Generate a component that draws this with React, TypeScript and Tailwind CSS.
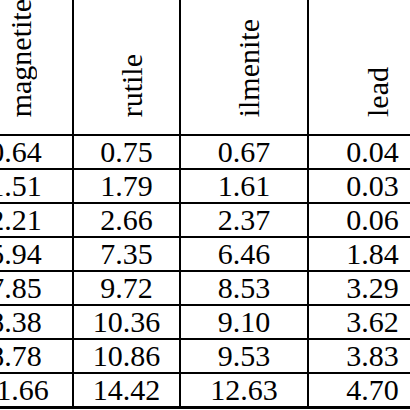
import React from 'react';

const headers = ['magnetite', 'rutile', 'ilmenite', 'lead'];

const rows = [
  ['0.64', '0.75', '0.67', '0.04'],
  ['1.51', '1.79', '1.61', '0.03'],
  ['2.21', '2.66', '2.37', '0.06'],
  ['5.94', '7.35', '6.46', '1.84'],
  ['7.85', '9.72', '8.53', '3.29'],
  ['8.38', '10.36', '9.10', '3.62'],
  ['8.78', '10.86', '9.53', '3.83'],
  ['11.66', '14.42', '12.63', '4.70'],
];

const App = () => {
  return (
    <div className="w-[410px] h-[410px] overflow-hidden bg-white text-black font-['Liberation_Serif','Times_New_Roman',serif]">
      <div className="ml-[-41px] w-[477px] grid grid-cols-[115px_107px_128px_127px]">
        {headers.map((h, i) => (
          <div
            key={h}
            className={`h-[136px] border-b-2 border-black flex items-end justify-center pb-[17px] pl-[10px] ${i < 3 ? 'border-r-2' : ''}`}
          >
            <span className="[writing-mode:vertical-rl] rotate-180 text-[30px] leading-[30px] whitespace-nowrap">
              {h}
            </span>
          </div>
        ))}
        {rows.map((row, r) =>
          row.map((v, c) => (
            <div
              key={`${r}-${c}`}
              className={`${r === rows.length - 1 ? 'h-[35px] border-b-[3px]' : 'h-[34px] border-b-2'} border-black text-center text-[30px] leading-[32px] ${c < 3 ? 'border-r-2' : ''}`}
            >
              {v}
            </div>
          ))
        )}
      </div>
    </div>
  );
};

export default App;
